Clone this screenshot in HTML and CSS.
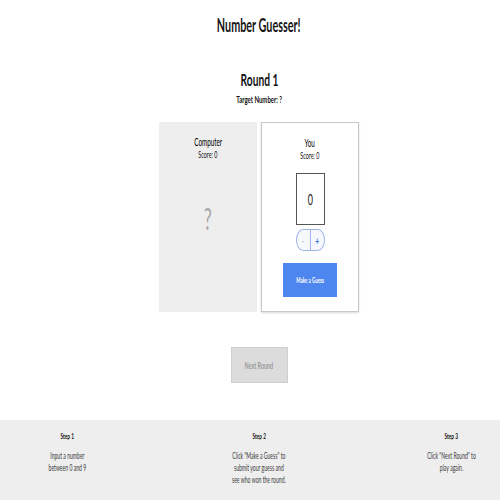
FILE: index.html
```html
<!DOCTYPE html>
<html>
<head>
<meta charset="utf-8">
<link rel="stylesheet" href="styles.css">
</head>
<body>
<main class="main">
  <h1 class="title narrow">Number Guesser!</h1>
  <section class="round">
    <h2 class="round-title narrow">Round 1</h2>
    <p class="target narrow">Target Number: ?</p>
  </section>
  <div class="cards">
    <div class="card card-computer">
      <div class="card-name narrow">Computer</div>
      <div class="card-score narrow">Score: 0</div>
      <div class="mystery narrow">?</div>
    </div>
    <div class="card card-you">
      <div class="card-name narrow">You</div>
      <div class="card-score narrow">Score: 0</div>
      <div class="guess-box"><span class="narrow">0</span></div>
      <div class="stepper">
        <button class="step-btn minus"><span class="narrow">-</span></button>
        <button class="step-btn plus"><span class="narrow">+</span></button>
      </div>
      <button class="guess-btn"><span class="narrow">Make a Guess</span></button>
    </div>
  </div>
  <div class="next-wrap">
    <button class="next-btn"><span class="narrow">Next Round</span></button>
  </div>
</main>
<footer class="steps">
  <div class="step">
    <div class="step-title narrow">Step 1</div>
    <p class="step-text narrow">Input a number<br>between 0 and 9</p>
  </div>
  <div class="step">
    <div class="step-title narrow">Step 2</div>
    <p class="step-text narrow">Click "Make a Guess" to<br>submit your guess and<br>see who won the round.</p>
  </div>
  <div class="step">
    <div class="step-title narrow">Step 3</div>
    <p class="step-text narrow">Click "Next Round" to<br>play again.</p>
  </div>
</footer>
</body>
</html>
```

FILE: styles.css
```css
html, body {
  margin: 0;
  padding: 0;
  overflow: hidden;
  background: #fff;
}
body {
  font-family: Lato, "Open Sans", sans-serif;
  color: #111;
  width: 500px;
  height: 500px;
}
.narrow {
  display: inline-block;
  transform: scaleX(0.6);
  transform-origin: 50% 50%;
  white-space: nowrap;
}
.main {
  box-sizing: border-box;
  width: 500px;
  padding-left: 18px;
  display: flex;
  flex-direction: column;
  align-items: center;
}
.title {
  margin: 15px 0 0;
  font-size: 18px;
  font-weight: 700;
  line-height: 20px;
  color: #151515;
}
.round {
  margin-top: 35px;
  display: flex;
  flex-direction: column;
  align-items: center;
}
.round-title {
  margin: 0;
  font-size: 17px;
  font-weight: 700;
  line-height: 20px;
}
.target {
  margin: 3px 0 0;
  font-size: 10px;
  font-weight: 700;
  line-height: 12px;
}
.cards {
  margin-top: 17px;
  display: flex;
  gap: 4px;
}
.card {
  width: 98px;
  height: 190px;
  box-sizing: border-box;
  display: flex;
  flex-direction: column;
  align-items: center;
  padding-top: 13px;
}
.card-computer {
  background: #eeeeee;
}
.card-you {
  background: #fff;
  border: 1px solid #c8c8c8;
  box-shadow: 0 1px 2px rgba(0,0,0,0.15);
}
.card-name {
  font-size: 10.5px;
  line-height: 14px;
  color: #000;
}
.card-score {
  font-size: 9px;
  line-height: 12px;
}
.mystery {
  margin-top: 40px;
  font-size: 30px;
  line-height: 34px;
  color: #a8a8a8;
}
.guess-box {
  margin-top: 11px;
  width: 29px;
  height: 52px;
  box-sizing: border-box;
  border: 1px solid #555;
  display: flex;
  align-items: center;
  justify-content: center;
  font-size: 15px;
  color: #222;
}
.stepper {
  margin-top: 4px;
  width: 29px;
  height: 22px;
  box-sizing: border-box;
  border: 1px solid #9fb4e8;
  border-radius: 7px / 11px;
  display: flex;
  overflow: hidden;
  background: #f7f8fc;
}
.step-btn {
  flex: 1;
  border: 0;
  background: transparent;
  padding: 0;
  font-family: inherit;
  font-size: 11px;
  font-weight: 700;
  display: flex;
  align-items: center;
  justify-content: center;
}
.minus {
  color: #c8c8c8;
  border-right: 1px solid #9fb4e8;
}
.plus {
  color: #3d6fd8;
}
.guess-btn {
  margin-top: 12px;
  width: 54px;
  height: 34px;
  border: 0;
  padding: 0;
  background: #4d86ee;
  color: #fff;
  font-family: inherit;
  font-size: 7.5px;
  font-weight: 700;
  display: flex;
  align-items: center;
  justify-content: center;
}
.next-wrap {
  margin-top: 35px;
}
.next-btn {
  width: 57px;
  height: 36px;
  padding: 0;
  border: 1px solid #cfcfcf;
  background: #dcdcdc;
  color: #9a9a9a;
  font-family: inherit;
  font-size: 9px;
  font-weight: 700;
  display: flex;
  align-items: center;
  justify-content: center;
}
.steps {
  margin-top: 37px;
  width: 500px;
  height: 80px;
  box-sizing: border-box;
  padding-left: 18px;
  background: #eeeeee;
  display: flex;
  justify-content: space-between;
}
.step {
  width: 98px;
  display: flex;
  flex-direction: column;
  align-items: center;
  padding-top: 11px;
}
.step-title {
  font-size: 8px;
  font-weight: 700;
  line-height: 10px;
}
.step-text {
  margin: 9px 0 0;
  text-align: center;
  font-size: 8.5px;
  line-height: 12px;
  color: #3a3a3a;
}
```
